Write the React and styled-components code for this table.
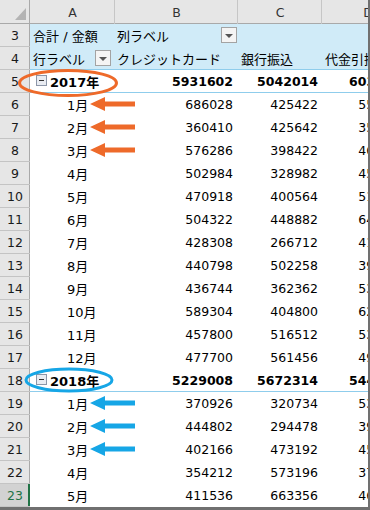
import React from 'react'
import styled, { createGlobalStyle } from 'styled-components'

const GlobalStyle = createGlobalStyle`
  html, body {
    margin: 0;
    padding: 0;
    background: #ffffff;
  }
  body {
    font-family: "DejaVu Sans", "Noto Sans CJK JP", sans-serif;
    color: #000;
  }
`

const COLS = '30px 85px 123px 84px 92px'
const BLUE_LINE = '#8fcdec'

const Frame = styled.div`
  width: 370px;
  height: 510px;
  box-sizing: border-box;
  border-right: 2px solid #707070;
  border-bottom: 3px solid #707070;
  overflow: hidden;
  background: #fff;
`

const HeadRow = styled.div`
  display: grid;
  grid-template-columns: ${COLS};
  height: 24px;
  background: #e6e6e6;
  box-shadow: inset 0 -1px 0 #a9a9a9;
`

const Corner = styled.div`
  position: relative;
  box-shadow: inset -1px 0 0 #a9a9a9;
  &::after {
    content: '';
    position: absolute;
    right: 4px;
    bottom: 4px;
    width: 0;
    height: 0;
    border-left: 11px solid transparent;
    border-bottom: 12px solid #b4b4b4;
  }
`

const ColLetter = styled.div`
  display: flex;
  align-items: center;
  justify-content: center;
  font-size: 12.5px;
  color: #333;
  padding-top: 1px;
  box-shadow: inset -1px 0 0 #c6c6c6;
`

const Row = styled.div`
  display: grid;
  grid-template-columns: ${COLS};
  height: 23px;
`

const RowNum = styled.div`
  display: flex;
  align-items: center;
  justify-content: center;
  font-size: 12.5px;
  background: ${p => (p.$active ? '#d2d2d2' : '#e6e6e6')};
  color: ${p => (p.$active ? '#217346' : '#1a1a1a')};
  box-shadow: inset 0 -1px 0 #c4c4c4,
    inset ${p => (p.$active ? '-2px 0 0 #217346' : '-1px 0 0 #a9a9a9')};
`

const Cell = styled.div`
  position: relative;
  display: flex;
  align-items: center;
  white-space: nowrap;
  overflow: visible;
  background: ${p => (p.$band ? '#d0ebf8' : '#fff')};
  box-shadow: ${p => (p.$line ? `inset 0 -1px 0 ${BLUE_LINE}` : 'none')};
`

const Label = styled(Cell)`
  font-size: 13px;
  font-weight: ${p => (p.$bold ? 700 : 400)};
  padding-left: ${p => p.$indent || 3}px;
  padding-bottom: 1px;
  box-sizing: border-box;
`

const Num = styled(Cell)`
  justify-content: flex-end;
  font-size: 12.5px;
  font-weight: ${p => (p.$bold ? 700 : 400)};
  padding-right: ${p => p.$pad || 4}px;
  box-sizing: border-box;
  padding-bottom: 1px;
`

const Spread = styled(Label)`
  justify-content: space-between;
  padding-right: ${p => p.$right || 4}px;
`

const DropBtn = styled.span`
  width: 16px;
  height: 16px;
  box-sizing: border-box;
  border: 1px solid #a3a3a3;
  background: #f4f4f4;
  display: flex;
  align-items: center;
  justify-content: center;
  &::after {
    content: '';
    border-left: 4px solid transparent;
    border-right: 4px solid transparent;
    border-top: 4px solid #555;
    margin-top: 1px;
  }
`

const Toggle = styled.span`
  width: 11px;
  height: 11px;
  box-sizing: border-box;
  border: 1px solid #8c96a8;
  background: #e9ecf2;
  margin-right: 3px;
  margin-top: -2px;
  display: inline-flex;
  align-items: center;
  justify-content: center;
  &::after {
    content: '';
    width: 5px;
    height: 1px;
    background: #333;
  }
`

const Ring = styled.svg`
  position: absolute;
  z-index: 2;
  left: ${p => p.$x}px;
  top: ${p => p.$y}px;
  overflow: visible;
  pointer-events: none;
`

const Pointer = styled.svg`
  position: absolute;
  z-index: 2;
  left: 60px;
  top: 3px;
  overflow: visible;
`

const months2017 = [
  ['1月', '686028', '425422', '553824'],
  ['2月', '360410', '425642', '352410'],
  ['3月', '576286', '398422', '469842'],
  ['4月', '502984', '328982', '454600'],
  ['5月', '470918', '400564', '518946'],
  ['6月', '504322', '448882', '642038'],
  ['7月', '428308', '266712', '418702'],
  ['8月', '440798', '502258', '392216'],
  ['9月', '436744', '362362', '538648'],
  ['10月', '589304', '404800', '620044'],
  ['11月', '457800', '516512', '532920'],
  ['12月', '477700', '561456', '490208'],
]

const months2018 = [
  ['1月', '370926', '320734', '532014'],
  ['2月', '444802', '294478', '393842'],
  ['3月', '402166', '473192', '451768'],
  ['4月', '354212', '573196', '374216'],
  ['5月', '411536', '663356', '462820'],
]

const Arrow = ({ color }) => (
  <Pointer width="46" height="16" viewBox="0 0 46 16">
    <path d="M0 8 L15 1 L15 5.5 L45 5.5 L45 10.5 L15 10.5 L15 15 Z" fill={color} />
  </Pointer>
)

const YearRow = ({ n, year, values, ring }) => (
  <Row>
    <RowNum>{n}</RowNum>
    <Label $bold $indent={6} $line>
      <Toggle />
      {year}
      {ring}
    </Label>
    {values.map((v, i) => (
      <Num key={i} $bold $line $pad={i === 0 ? 5 : 4}>{v}</Num>
    ))}
  </Row>
)

const MonthRow = ({ n, m, arrow, active }) => (
  <Row>
    <RowNum $active={active}>{n}</RowNum>
    <Label $indent={37}>
      {m[0]}
      {arrow && <Arrow color={arrow} />}
    </Label>
    <Num $pad={5}>{m[1]}</Num>
    <Num>{m[2]}</Num>
    <Num $pad={8}>{m[3]}</Num>
  </Row>
)

export default function App() {
  return (
    <>
      <GlobalStyle />
      <Frame>
        <HeadRow>
          <Corner />
          <ColLetter>A</ColLetter>
          <ColLetter>B</ColLetter>
          <ColLetter>C</ColLetter>
          <ColLetter>D</ColLetter>
        </HeadRow>

        <Row>
          <RowNum>3</RowNum>
          <Label $band>合計 / 金額</Label>
          <Spread $band $indent={2} $right={1}>
            列ラベル
            <DropBtn />
          </Spread>
          <Cell $band />
          <Cell $band />
        </Row>
        <Row>
          <RowNum>4</RowNum>
          <Spread $band $line>
            行ラベル
            <DropBtn />
          </Spread>
          <Label $band $line $indent={2}>クレジットカード</Label>
          <Label $band $line>銀行振込</Label>
          <Label $band $line>代金引換</Label>
        </Row>

        <YearRow
          n={5}
          year="2017年"
          values={['5931602', '5042014', '6034718']}
          ring={
            <Ring $x={-12} $y={-1} width="100" height="28" viewBox="0 0 100 28">
              <ellipse cx="50" cy="14" rx="48.5" ry="12.5" fill="none" stroke="#ee6a2a" strokeWidth="3" />
            </Ring>
          }
        />
        {months2017.map((m, i) => (
          <MonthRow key={m[0]} n={6 + i} m={m} arrow={i < 3 ? '#ee6a2a' : null} />
        ))}

        <YearRow
          n={18}
          year="2018年"
          values={['5229008', '5672314', '5440660']}
          ring={
            <Ring $x={-7} $y={-1} width="92" height="24" viewBox="0 0 92 24">
              <ellipse cx="46" cy="12" rx="43" ry="11" fill="none" stroke="#16a6e6" strokeWidth="3" />
            </Ring>
          }
        />
        {months2018.map((m, i) => (
          <MonthRow
            key={m[0]}
            n={19 + i}
            m={m}
            arrow={i < 3 ? '#16a6e6' : null}
            active={i === 4}
          />
        ))}
      </Frame>
    </>
  )
}
